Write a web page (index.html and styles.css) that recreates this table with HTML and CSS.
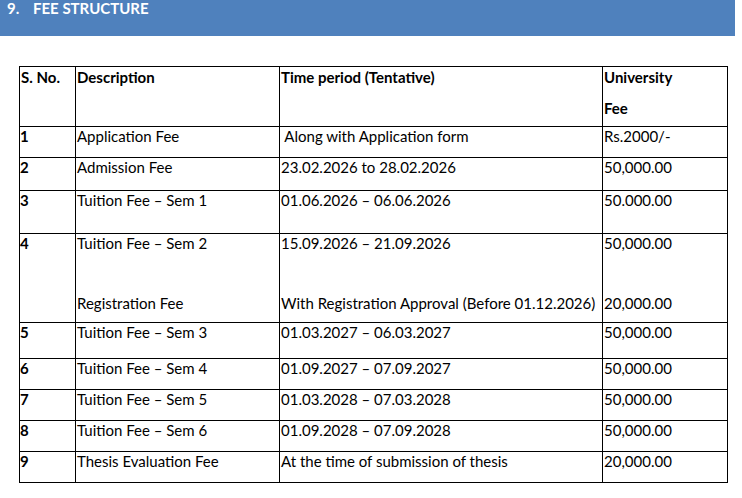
FILE: index.html
```html
<!DOCTYPE html>
<html>
<head>
<meta charset="utf-8">
<link rel="stylesheet" href="styles.css">
</head>
<body>
<div class="banner"><span class="num">9.</span><span class="title">FEE STRUCTURE</span></div>
<table class="fees">
  <colgroup>
    <col class="c1"><col class="c2"><col class="c3"><col class="c4">
  </colgroup>
  <tr class="h60 head">
    <td>S. No.</td><td>Description</td><td>Time period (Tentative)</td>
    <td><div>University</div><div class="gap1">Fee</div></td>
  </tr>
  <tr class="h31"><td class="sn">1</td><td>Application Fee</td><td>&nbsp;Along with Application form</td><td>Rs.2000/-</td></tr>
  <tr class="h33"><td class="sn">2</td><td>Admission Fee</td><td>23.02.2026 to 28.02.2026</td><td>50,000.00</td></tr>
  <tr class="h43"><td class="sn">3</td><td>Tuition Fee – Sem 1</td><td>01.06.2026 – 06.06.2026</td><td>50.000.00</td></tr>
  <tr class="h89">
    <td class="sn">4</td>
    <td><div>Tuition Fee – Sem 2</div><div class="gap2">Registration Fee</div></td>
    <td><div>15.09.2026 – 21.09.2026</div><div class="gap2">With Registration Approval (Before 01.12.2026)</div></td>
    <td><div>50,000.00</div><div class="gap2">20,000.00</div></td>
  </tr>
  <tr class="h36"><td class="sn">5</td><td>Tuition Fee – Sem 3</td><td>01.03.2027 – 06.03.2027</td><td>50,000.00</td></tr>
  <tr class="h31"><td class="sn">6</td><td>Tuition Fee – Sem 4</td><td>01.09.2027 – 07.09.2027</td><td>50,000.00</td></tr>
  <tr class="h31"><td class="sn">7</td><td>Tuition Fee – Sem 5</td><td>01.03.2028 – 07.03.2028</td><td>50,000.00</td></tr>
  <tr class="h31"><td class="sn">8</td><td>Tuition Fee – Sem 6</td><td>01.09.2028 – 07.09.2028</td><td>50,000.00</td></tr>
  <tr class="h31"><td class="sn">9</td><td>Thesis Evaluation Fee</td><td>At the time of submission of thesis</td><td>20,000.00</td></tr>
</table>
</body>
</html>
```
FILE: styles.css
```css
html, body {
  margin: 0;
  padding: 0;
  background: #ffffff;
}
body {
  font-family: Lato, "Liberation Sans", sans-serif;
  color: #000;
}
.banner {
  width: 735px;
  height: 36px;
  background: #4f81bd;
  color: #ffffff;
  font-weight: bold;
  font-size: 15px;
  line-height: 16px;
  padding-left: 7px;
  box-sizing: border-box;
  display: flex;
}
.banner .num {
  width: 26px;
}
.fees {
  margin: 30px 0 0 19px;
  border-collapse: collapse;
  table-layout: fixed;
  width: 709px;
  font-size: 15px;
  line-height: 18px;
}
.c1 { width: 56px; }
.c2 { width: 204px; }
.c3 { width: 323px; }
.c4 { width: 125px; }
.fees td {
  border: 1px solid #000;
  vertical-align: top;
  padding: 0 0 0 1px;
  white-space: nowrap;
}
.head td { font-weight: bold; padding-top: 1px; }
.fees td.sn { font-weight: bold; padding-left: 0; }
.gap1 { margin-top: 13px; }
.gap2 { margin-top: 42px; }
.h60 { height: 60px; }
.h31 { height: 31px; }
.h33 { height: 33px; }
.h36 { height: 36px; }
.h43 { height: 43px; }
.h89 { height: 89px; }
```
